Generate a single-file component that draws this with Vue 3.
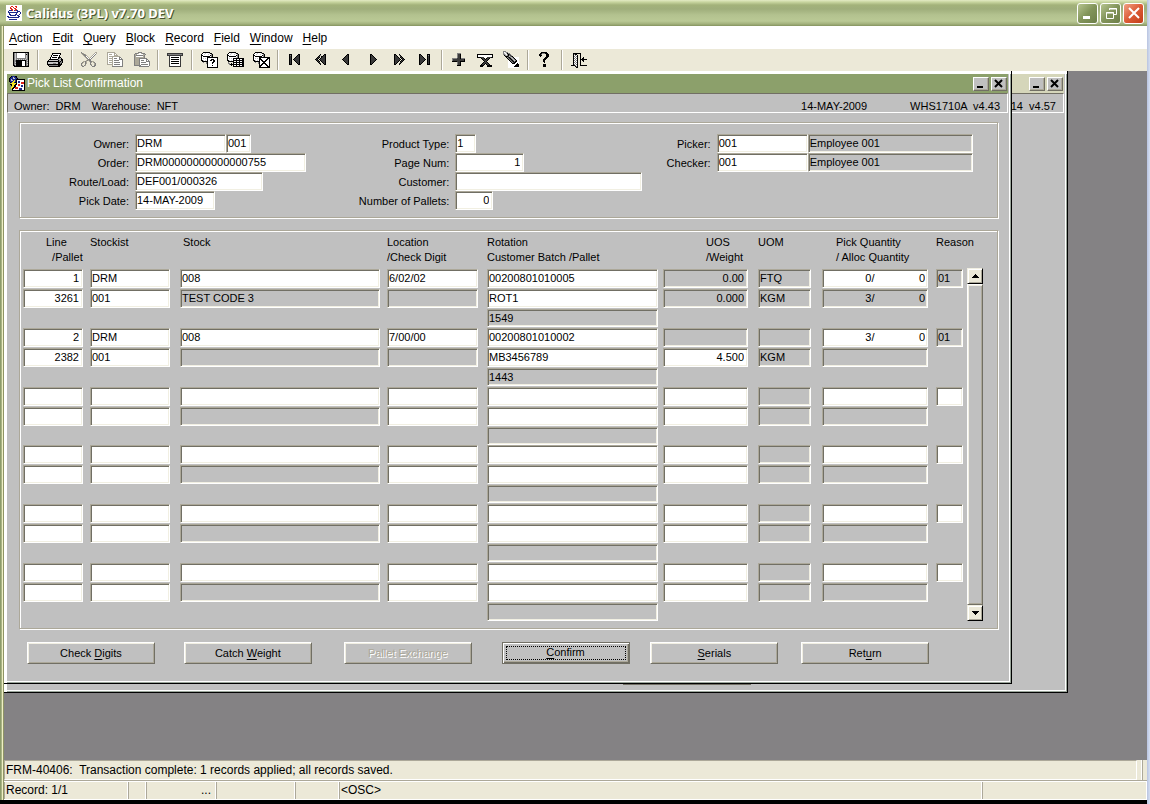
<script setup>
const menus = [
  ['', 'A', 'ction'], ['', 'E', 'dit'], ['', 'Q', 'uery'], ['', 'B', 'lock'],
  ['', 'R', 'ecord'], ['', 'F', 'ield'], ['', 'W', 'indow'], ['', 'H', 'elp'],
]

// Toolbar glyphs are small bitmaps: one character per pixel, looked up in the palette.
const palette = { k: '#000000', d: '#3a3a3a', g: '#808080', s: '#aca899', l: '#c6c6c6', w: '#ffffff' }

const glyphs = {
  save: [
    '', ' kkkkkkkkkkkkkkkk', ' kglgwwwwwwwwglgk', ' kglgwwwwwwwwgkgk', ' kglgwwwwwwwwglgk',
    ' kglgwwwwwwwwglgk', ' kglgwwwwwwwwglgk', ' kglgggggggggglgk', ' kglglglglglglggk',
    ' kggkkkkkkkkkkglk', ' kggkkkkkkwwwkggk', ' kglkkkkkkwwwkglk', ' kggkkkkkkwwwkggk',
    ' kglkkkkkkwwwkglk', ' kkgkkkkkkwwwkggk', '  kkkkkkkkkkkkkkk',
  ],
  print: [
    '', '', '      kkkkkkkkk', '      kwwwwwwwk', '     kwkkkkkwk', '     kwwwwwwwk', '    kwkkkkkwkkk',
    '    kwwwwwwwkglk', '   kkkkkkkkkglgkk', '  klllllllllkglkk', ' kkkkkkkkkkkkgkgk', ' kllllllllllkkggk',
    ' klllllgggllkkgk', ' kkkkkkkkkkkkkkk', '  kgggggggggkkk', '   kkkkkkkkkkk',
  ],
  cut: [
    '', ' g             ss', ' sgs          sws', '  sggs       swg', '   sggs     swg', '    sgws   swg', '     sgws swg',
    '      sgwswg', '       sggg', '      sgsgg', '   ssgs  sggss', '  gs gs   gs sg', ' gs  gs   g   sg',
    ' g   g    gs  sg', ' gs gs     g  gg', '  gg        ggg',
  ],
  copy: [
    '', ' ssssssss', ' swwwwwwss', ' swssswwsws', ' swwwwwwssss', ' swsssssssssss', ' swwwwswwwwwwgg',
    ' swsssswgggwwgwg', ' swwwwswwwwwwgggg', ' swsssswgggggwwwg', ' swwwwswwwwwwwwwg', ' swsssswggggggwwg',
    ' swwwwswwwwwwwwwg', ' sssssswggggggwwg', '      swwwwwwwwwg', '      ggggggggggg',
  ],
  paste: [
    '', '      gggg', '   gggswwsggg', '  gsswwwwwwssg', '  gsgggggggsg', '  gswwwwwwwsg', '  gsssssssssg',
    '  gssssgggggggg', '  gssssgwwwwwwgg', '  gssssgwgggwwgwg', '  gssssgwwwwwwgggg', '  gssssgwgggggwwwg',
    '  gssssgwwwwwwwwwg', '  gssssgwgggggggwg', '  gggggggwwwwwwwwg', '       gggggggggg',
  ],
  list: [
    '', '', ' dddddddddddddddd', ' dggggggggggggggd', ' dddddddddddddddd', '   dwwwwwwwwwwd', '   dwkkkkkkkkwd',
    '   dwwwwwwwwwwd', '   dwkkkkkkkkwd', '   dwwwwwwwwwwd', '   dwkkkkkkkkwd', '   dwwwwwwwwwwd',
    '   dwkkkkkkkkwd', '   dwwwwwwwwwwd', '   dwwwwwwwwwwd', '   dddddddddddd',
  ],
  enterQuery: [
    '', '   kkkkkkk', '  kwwlwwwlkk', ' kwwlwwwlwwgk', ' kkwwwwwwwkgk', ' kwkkkkkkkwgk', ' kwwwwwkkkkkkkkkkk', ' kwlwlwkwwwwwwwwwk',
    ' kwwwwwkwwwkkkwwwk', ' kklwlwkwwkkwkkwwk', '  kkkkkkwwwwwkkwwk', '   g  gkwwwwkkwwwk', '      gkwwwwkwwwwk',
    '       kwwwwwwwwwk', '       kwwwwkwwwwk', '       kwwwwwwwwwk', '       kkkkkkkkkkk',
  ],
  runQuery: [
    '', '   kkkkkkk', '  kwwlwwwlkk', ' kwwlwwwlwwgk', ' kkwwwwwwwkgk', ' kwkkkkkkkwgk', ' kwwwwwwwwlgk', ' kwlwlwkkkkkkkkkkk',
    ' kwwwwwkwwkwwkwwkk', ' kklwlwkkkkkkkkkkk', '  kkkkkkwwkwwkwwkk', '  g    kkkkkkkkkkk', '  gg k kwwkwwkwwkk', '   gkkkkkkkkkkkkkk',
    '     k kwwkwwkwwkk', '       kkkkkkkkkkk',
  ],
  cancelQuery: [
    '', '   kkkkkkk', '  kwwlwwwlkk', ' kwwlwwwlwwgk', ' kkwwwwwwwkgk', ' kwkkkkkkkwgk', ' kwwwwwkkkkkkkkkkk', ' kwlwlwkkwwwwwwkkk',
    ' kwwwwwkkkwwwwkkwk', ' kklwlwkwkkwwkkwwk', '  kkkkkkwwkkkkwwwk', '   g  gkwwwkkwwwwk', '      gkwwkkkkwwwk', '       kwkkwwkkwwk',
    '       kkkwwwwkkwk', '       kkwwwwwwkkk', '       kkkkkkkkkkk',
  ],
  first: [
    '', '', '', '   kkk      kk', '   kgk     kdk', '   kdk    kddk', '   kdk   kdddk', '   kdk  kddddk', '   kdk kdddddk',
    '   kdk  kddddk', '   kdk   kdddk', '   kdk    kddk', '   kdk     kdk', '   kkk      kk',
  ],
  pageUp: [
    '', '', '', '        k   kk', '       kg  kdk', '      kd kkddk', '     kdk kdddk', '    kdk kddddk', '   kdk kdddddk',
    '    kdk kddddk', '     kdk kdddk', '      kd  kddk', '       kd  kdk', '        k   kk',
  ],
  prev: [
    '', '', '', '         kk', '        kdk', '       kddk', '      kdddk', '     kddddk', '    kdddddk',
    '     kddddk', '      kdddk', '       kddk', '        kdk', '         kk',
  ],
  next: [
    '', '', '', '      kk', '      kdk', '      kddk', '      kdddk', '      kddddk', '      kdddddk',
    '      kddddk', '      kdddk', '      kddk', '      kdk', '      kk',
  ],
  pageDown: [
    '', '', '', '    kk   k', '    kdk  gk', '    kddk  dk', '    kdddk kdk', '    kddddk kdk', '    kdddddk kdk',
    '    kddddk kdk', '    kdddk kdk', '    kddk  dk', '    kdk  dk', '    kk   k',
  ],
  last: [
    '', '', '', '   kk      kkk', '   kdk     kgk', '   kddk    kdk', '   kdddk   kdk', '   kddddk  kdk', '   kdddddk kdk',
    '   kddddk  kdk', '   kdddk   kdk', '   kddk    kdk', '   kdk     kdk', '   kk      kkk',
  ],
  insert: [
    '', '', '       gggg', '       gddk', '       gddk', '       gddk', '       gddk', '  gggggdddkgggg', '  gdddddddddddk', '  gdddddddddddk',
    '  kkkkkdddkkkkk', '       gddk', '       gddk', '       gddk', '       kkkk',
  ],
  remove: [
    '', '', '', ' kkkkkkkkkkkkkkkk', ' kwwwwwwwwwwwwwwk', ' kwwwwwwwwwwwwwwk', ' kkkkdddwwwddddkk', '     kddk kddk', '      kddkddk',
    '       kdddk', '        kdk', '       kdddk', '      kddkddk', '     kddk kddk', '    kkkk   kkkkk', '    kkk    kkkkk',
  ],
  clear: [
    ' ggg', ' gwlgg', ' glwlkgg', ' gglwgkdg', '  kglgkgdg', '   kkkdlgdk', '    kgdkglgkwwwww', '     kgdkglgkwwww', '      kgdkglgkwww',
    '      wkgdkglgkww', '      wwkgdkgkkww', '      wwwkgdkkwww', '      wwwwkkkwwkw', '      wwwwwwwwkkk', '      wwwwwwwkkkk', '      wwwwwwkkkkk', '      wwwwwwwwwww',
  ],
  help: [
    '', '     kkkkkk', '    kkgggkkk', '   kkg    kkk', '   kkk    kkk', '    k     kkk', '         kkk', '        kkk', '       kkk',
    '       kk', '       kk', '        k', '', '       kkk', '       kkk', '       kkk',
  ],
  exit: [
    '', '', '   kkkkkkkk', '   kgkk   k', '   kwgwk  k', '   kgwgk  k', '   kwgwk  k  k', '   kgwgk  k kk', '   kwgwk  kkkkkkk',
    '   kgwgk  k kk', '   kwgwk  k  k', '   kgwgk  k', '   kwgwk  k', '   kgwgk  k', ' kkkkgwk  kkkkkkk', '     kgk', '      kk',
  ],
  java: [
    'wwwwwwwwwwwwwwww', 'wwwwwrrwwrrwwwww', 'wwwwrwwrwwrwwwww', 'wwwwrrwwrrwwwwww', 'wwwwwrrwwrrwwwww', 'wwwbbbrwbrbbwwww', 'wwbwwwwwwwwbbbww',
    'wwbbbbbbbbbbwwbw', 'wwwbwwwwwwbwwwbw', 'wwwbbwwwwbbwwbww', 'wwwwbbbbbbwbbwww', 'wbbwwwwwwwwwbbww', 'wwbbbbbbbbbbbwww', 'wwwwwwwwwwwwwwww', 'wwwbbbbbbbbwwwww', 'wwwwwwwwwwwwwwww',
  ],
  form: [
    '  kbbbkk', ' kbblbbkg', 'kbbbllbbkg', 'kblbbbbkkkkkkkkk', 'kbllbybkwwwwwwwk', 'kbbbyybkwbbwwwwk', ' kbyybkkwbbwrrrk', '  yyyyykwwwwrrrk',
    ' kkyyykkwrrwwwwk', '  kyykkwwrrwbbwk', '   yykkwwwwwbbwk', '  yykkrrrwwwwwwk', '  ykkwrrrwbbbwwk', '   kwwwwwwbbbwwk', '   kkkkkkkkkkkkk',
  ],
}
const extra = { r: '#e02418', b: '#1c2a8c', y: '#f8e820' }

function layers(name) {
  const out = {}
  glyphs[name].forEach((row, y) => {
    for (let x = 0; x < row.length;) {
      const c = row[x]
      let n = 1
      while (row[x + n] === c) n++
      if (c !== ' ') out[c] = (out[c] || '') + `M${x} ${y}h${n}v1h-${n}z`
      x += n
    }
  })
  return Object.entries(out).map(([c, d]) => ({ d, fill: palette[c] || extra[c] }))
}

const tool = (icon, label) => ({ icon, label, layers: layers(icon) })
const toolGroups = [
  [tool('save', 'Save')],
  [tool('print', 'Print')],
  [tool('cut', 'Cut'), tool('copy', 'Copy'), tool('paste', 'Paste')],
  [tool('list', 'List of values')],
  [tool('enterQuery', 'Enter query'), tool('runQuery', 'Execute query'), tool('cancelQuery', 'Cancel query')],
  [tool('first', 'First record'), tool('pageUp', 'Previous set'), tool('prev', 'Previous record'),
    tool('next', 'Next record'), tool('pageDown', 'Next set'), tool('last', 'Last record')],
  [tool('insert', 'Insert record'), tool('remove', 'Delete record'), tool('clear', 'Clear record')],
  [tool('help', 'Help')],
  [tool('exit', 'Exit')],
]
const javaIcon = layers('java')
const formIcon = layers('form')

const info = { owner: 'Owner:  DRM', warehouse: 'Warehouse:  NFT', date: '14-MAY-2009', version: 'WHS1710A  v4.43', backVersion: '14  v4.57' }
const statusMessage = 'FRM-40406:  Transaction complete: 1 records applied; all records saved.'

const headerColumns = [
  [
    { label: 'Owner:', fields: [{ v: 'DRM', w: 'w91' }, { v: '001', w: 'w25' }] },
    { label: 'Order:', fields: [{ v: 'DRM00000000000000755', w: 'w171' }] },
    { label: 'Route/Load:', fields: [{ v: 'DEF001/000326', w: 'w128' }] },
    { label: 'Pick Date:', fields: [{ v: '14-MAY-2009', w: 'w80' }] },
  ],
  [
    { label: 'Product Type:', fields: [{ v: '1', w: 'w21' }] },
    { label: 'Page Num:', fields: [{ v: '1', w: 'w69', num: true }] },
    { label: 'Customer:', fields: [{ v: '', w: 'w187' }] },
    { label: 'Number of Pallets:', fields: [{ v: '0', w: 'w38', num: true }] },
  ],
  [
    { label: 'Picker:', fields: [{ v: '001', w: 'w91' }, { v: 'Employee 001', w: 'w165', ro: true }] },
    { label: 'Checker:', fields: [{ v: '001', w: 'w91' }, { v: 'Employee 001', w: 'w165', ro: true }] },
  ],
]

const columns = [
  { key: 'line', head: 'Line\n  /Pallet' },
  { key: 'stockist', head: 'Stockist' },
  { key: 'stock', head: 'Stock' },
  { key: 'location', head: 'Location\n/Check Digit' },
  { key: 'rotation', head: 'Rotation\nCustomer Batch /Pallet' },
  { key: 'uos', head: 'UOS\n/Weight' },
  { key: 'uom', head: 'UOM' },
  { key: 'pick', head: 'Pick Quantity\n/ Alloc Quantity' },
  { key: 'reason', head: 'Reason' },
]

const e = (v = '') => ({ v })
const n = (v = '') => ({ v, num: true })
const ro = (v = '') => ({ v, ro: true })
const nro = (v = '') => ({ v, num: true, ro: true })
const pair = (a, b, r = false) => ({ pair: [a, b], ro: r })

const blank = () => [
  [n(), e(), e(), e(), e(), n(), ro(), pair('', ''), e()],
  [n(), e(), ro(), e(), e(), n(), ro(), pair('', '', true), null],
  [null, null, null, null, ro(), null, null, null, null],
]
const records = [
  [
    [n('1'), e('DRM'), e('008'), e('6/02/02'), e('00200801010005'), nro('0.00'), ro('FTQ'), pair('0/', '0'), ro('01')],
    [n('3261'), e('001'), ro('TEST CODE 3'), ro(), e('ROT1'), nro('0.000'), ro('KGM'), pair('3/', '0', true), null],
    [null, null, null, null, ro('1549'), null, null, null, null],
  ],
  [
    [n('2'), e('DRM'), e('008'), e('7/00/00'), e('00200801010002'), nro(), ro(), pair('3/', '0'), ro('01')],
    [n('2382'), e('001'), ro(), ro(), e('MB3456789'), n('4.500'), ro('KGM'), pair('', '', true), null],
    [null, null, null, null, ro('1443'), null, null, null, null],
  ],
  blank(), blank(), blank(), blank(),
]

const actions = [
  { text: ['Check ', 'D', 'igits'] },
  { text: ['Catch ', 'W', 'eight'] },
  { text: ['Pallet Exchange', '', ''], disabled: true },
  { text: ['', 'C', 'onfirm'], primary: true },
  { text: ['', 'S', 'erials'] },
  { text: ['Ret', 'u', 'rn'] },
]
</script>

<template>
  <div class="screen">
    <div class="app">
      <header class="titlebar">
        <svg class="px" width="16" height="16" viewBox="0 0 16 16" aria-hidden="true">
          <path v-for="l in javaIcon" :key="l.fill" :d="l.d" :fill="l.fill" />
        </svg>
        <h1>Calidus (3PL) v7.70 DEV</h1>
        <div class="winbtns">
          <button type="button" aria-label="Minimize">
            <svg width="18" height="18" viewBox="0 0 18 18"><path d="M4 12h7v3H4z" fill="#fff" /></svg>
          </button>
          <button type="button" aria-label="Restore">
            <svg width="18" height="18" viewBox="0 0 18 18" fill="none" stroke="#fff"><path d="M7.500 6V4.500h7v6H12M7 5h8M4.500 8.500h7v6h-7zM4 9h8" /></svg>
          </button>
          <button type="button" aria-label="Close" class="close">
            <svg width="18" height="18" viewBox="0 0 18 18" fill="none" stroke="#fff" stroke-width="2"><path d="M4 4l10 10M14 4L4 14" /></svg>
          </button>
        </div>
      </header>

      <nav class="menubar" aria-label="Main menu">
        <button v-for="m in menus" :key="m[1]" type="button">{{ m[0] }}<u>{{ m[1] }}</u>{{ m[2] }}</button>
      </nav>

      <div class="toolbar" role="toolbar" aria-label="Tools">
        <div v-for="(g, gi) in toolGroups" :key="gi" class="group">
          <button v-for="t in g" :key="t.icon" type="button" :aria-label="t.label">
            <svg class="px" width="18" height="18" viewBox="0 0 18 18" aria-hidden="true">
              <path v-for="l in t.layers" :key="l.fill" :d="l.d" :fill="l.fill" />
            </svg>
          </button>
        </div>
      </div>

      <main class="desktop">
        <section class="mdi back" aria-label="Background form">
          <div class="mdi-title">
            <div class="mdi-btns">
              <button type="button" aria-label="Minimize form"><svg class="px" width="12" height="12" viewBox="0 0 12 12"><path d="M2 8h6v2H2z" /></svg></button>
              <button type="button" aria-label="Close form"><svg width="12" height="12" viewBox="0 0 12 12" fill="none" stroke="#000" stroke-width="2"><path d="M2 2l7 7M9 2L2 9" /></svg></button>
            </div>
          </div>
          <div class="infobar"><span class="version">{{ info.backVersion }}</span></div>
          <div class="peek"></div>
        </section>

        <section class="mdi front">
          <div class="mdi-title active">
            <svg class="px" width="16" height="16" viewBox="0 0 16 16" aria-hidden="true">
              <path v-for="l in formIcon" :key="l.fill" :d="l.d" :fill="l.fill" />
            </svg>
            <h2>Pick List Confirmation</h2>
            <div class="mdi-btns">
              <button type="button" aria-label="Minimize window"><svg class="px" width="12" height="12" viewBox="0 0 12 12"><path d="M2 8h6v2H2z" /></svg></button>
              <button type="button" aria-label="Close window"><svg width="12" height="12" viewBox="0 0 12 12" fill="none" stroke="#000" stroke-width="2"><path d="M2 2l7 7M9 2L2 9" /></svg></button>
            </div>
          </div>
          <div class="infobar">
            <span>{{ info.owner }}</span><span>{{ info.warehouse }}</span>
            <span class="date">{{ info.date }}</span><span>{{ info.version }}</span>
          </div>

          <form class="body" @submit.prevent>
            <div class="frame head">
              <div v-for="(col, ci) in headerColumns" :key="ci" class="hcol">
                <div v-for="(r, ri) in col" :key="r.label" class="hrow">
                  <label :for="`h${ci}-${ri}`">{{ r.label }}</label>
                  <input v-for="(f, fi) in r.fields" :id="fi ? null : `h${ci}-${ri}`" :key="fi" type="text" class="box"
                    :class="[f.w, { ro: f.ro, num: f.num }]" :value="f.v" :readonly="f.ro"
                    :aria-label="fi ? r.label + ' detail' : null">
                </div>
              </div>
            </div>

            <div class="frame lines">
              <div class="grid">
                <table>
                  <colgroup><col v-for="c in columns" :key="c.key" :class="'c-' + c.key"></colgroup>
                  <thead>
                    <tr><th v-for="c in columns" :key="c.key" scope="col" :class="'h-' + c.key">{{ c.head }}</th></tr>
                  </thead>
                  <tbody v-for="(rec, i) in records" :key="i">
                    <tr v-for="(row, j) in rec" :key="j">
                      <td v-for="(cell, k) in row" :key="k" :class="'p-' + columns[k].key">
                        <div v-if="cell && cell.pair" class="box pair" :class="{ ro: cell.ro }">
                          <input type="text" :value="cell.pair[0]" :readonly="cell.ro" :aria-label="`Quantity, record ${i + 1} row ${j + 1}`">
                          <input type="text" :value="cell.pair[1]" :readonly="cell.ro" :aria-label="`Remainder, record ${i + 1} row ${j + 1}`">
                        </div>
                        <input v-else-if="cell" type="text" class="box" :class="{ ro: cell.ro, num: cell.num }"
                          :value="cell.v" :readonly="cell.ro" :aria-label="`${columns[k].key}, record ${i + 1} row ${j + 1}`">
                      </td>
                    </tr>
                  </tbody>
                </table>
              </div>
              <div class="scroll">
                <button type="button" aria-label="Scroll up"><svg class="px" width="7" height="4" viewBox="0 0 7 4"><path d="M3 0h1v1h1v1h1v1h1v1H0V3h1V2h1V1h1z" /></svg></button>
                <div class="track"></div>
                <button type="button" aria-label="Scroll down"><svg class="px" width="7" height="4" viewBox="0 0 7 4"><path d="M0 0h7v1H6v1H5v1H4v1H3V3H2V2H1V1H0z" /></svg></button>
              </div>
            </div>

            <div class="actions">
              <button v-for="a in actions" :key="a.text.join('')" type="button" :disabled="a.disabled" :class="{ primary: a.primary }">
                <span>{{ a.text[0] }}<u>{{ a.text[1] }}</u>{{ a.text[2] }}</span>
              </button>
            </div>
          </form>
        </section>
      </main>

      <footer class="status">
        <div class="message"><p>{{ statusMessage }}</p><i></i></div>
        <div class="cells">
          <span>Record: 1/1</span><span></span><span class="dots">...</span><span></span><span></span><span>&lt;OSC&gt;</span><span></span>
        </div>
      </footer>
    </div>
  </div>
</template>

<style>
html, body { margin: 0; background: #000; }
</style>

<style scoped>
* { box-sizing: border-box; }
.screen {
  min-height: 100vh;
  display: flex;
  padding-right: 3px;
  background: linear-gradient(to right, #b9c4e0, #d5dff2) right / 3px 100% no-repeat;
  font-family: "Liberation Sans", Arial, sans-serif;
  font-size: 11px;
  color: #000;
}
.app {
  flex: 1;
  min-width: 0;
  display: flex;
  flex-direction: column;
  padding-left: 4px;
  padding-bottom: 4px;
  background: linear-gradient(#000, #000) bottom / 100% 4px no-repeat,
    linear-gradient(to right, #8d9b6b 0 1px, #a9b485 1px 2px, #efefc4 2px 3px, #8e9465 3px 4px, #000 4px);
}
button { font: inherit; color: inherit; margin: 0; padding: 0; border: 0; background: none; }
u { text-decoration: underline; text-underline-offset: 2px; }
.px { shape-rendering: crispEdges; }

.titlebar {
  height: 26px;
  margin-left: -4px;
  padding: 0 3px 0 6px;
  display: flex;
  align-items: center;
  background: linear-gradient(#e3ebc4 0, #c9d6a0 2px, #a3b27a 5px, #9fae7b 9px, #b3c28f 15px, #bac995 21px, #a2b17c 24px, #85935f 26px);
}
.titlebar h1 {
  flex: 1;
  margin: 0 0 0 4px;
  font: bold 13px/24px "Noto Sans", "Open Sans", sans-serif;
  color: #fff;
  text-shadow: 1px 1px 0 #49542f;
}
.winbtns { display: flex; gap: 2px; }
.winbtns button {
  width: 21px;
  height: 21px;
  border: 1px solid #fff;
  border-radius: 3px;
  display: grid;
  place-items: center;
  background: linear-gradient(135deg, #b6c48f, #82945a 50%, #6d7f48);
}
.winbtns .close { background: linear-gradient(135deg, #f0a184, #dc5b36 50%, #c23e18); }

.menubar { height: 23px; padding-left: 5px; display: flex; gap: 10px; background: #fff; font-size: 12px; line-height: 24px; }

.toolbar { height: 22px; padding-left: 4px; display: flex; background: #ece9d8; }
.group { display: flex; }
.group + .group::before { content: ""; width: 2px; height: 20px; margin: 1px 3px; background: linear-gradient(to right, #aca899 50%, #fff 50%); }
.group button { width: 26px; height: 22px; display: grid; place-items: center; }

.desktop { position: relative; flex: 1; padding: 0 135px 76px 0; background: #848284; }
.mdi {
  padding: 3px 3px 3px 3px;
  background: #c0c0c0;
  border-right: 1px solid #000;
  border-bottom: 1px solid #000;
  box-shadow: inset 3px 3px 0 #fff, inset -1px -1px 0 #9aa59a, inset -2px -2px 0 #fff;
}
.front { position: relative; }
.back { position: absolute; top: 0; left: 0; right: 79px; bottom: 67px; }
.peek { position: absolute; left: 619px; bottom: 7px; width: 128px; height: 1px; background: #716f64; }
.mdi-title { height: 19px; display: flex; align-items: center; background: #d5d6ba; padding: 0 1px 0 2px; }
.mdi-title.active { background: #8ca06b; color: #fff; }
.mdi-title h2 { margin: 0 0 0 2px; font-size: 12px; line-height: 17px; font-weight: normal; }
.mdi-btns { margin-left: auto; display: flex; gap: 2px; }
.mdi-btns button {
  width: 16px;
  height: 14px;
  display: grid;
  place-items: center;
  background: #c0c0c0;
  border: 1px solid;
  border-color: #fff #716f64 #716f64 #fff;
  box-shadow: inset -1px -1px 0 #aca899;
}
.infobar {
  height: 20px;
  padding: 3px 7px 0 6px;
  display: flex;
  gap: 11px;
  white-space: pre;
  line-height: 18px;
  border: 1px solid;
  border-color: #716f64 #fff #fff #716f64;
}
.infobar .date, .infobar .version { margin-left: auto; }
.infobar .date { margin-right: 32px; }

.body { padding: 9px 10px 16px 12px; }
.frame { border: 1px solid #aca899; box-shadow: inset 1px 1px 0 #fff, 1px 1px 0 #fff; }
.head { display: grid; grid-template-columns: 320fr 314fr 342fr; height: 96px; padding: 11px 0 0; }
.hcol { display: flex; flex-direction: column; }
.hrow { display: flex; height: 19px; }
.hrow label { width: 109px; margin-right: 6px; text-align: right; line-height: 20px; white-space: nowrap; }
.hcol:last-child label { width: 56px; }
.box {
  display: block;
  height: 19px;
  margin: 0;
  padding: 0 1px 1px 1px;
  font: inherit;
  color: #000;
  background: #fff;
  border: 1px solid;
  border-color: #aca899 #fff #fff #aca899;
  border-radius: 0;
  outline: 0;
  box-shadow: inset 1px 1px 0 #716f64, inset -1px -1px 0 #f1efe2;
}
.ro { background: #c0c0c0; }
.num { text-align: right; padding-right: 3px; }
.w21 { width: 21px; }
.w25 { width: 25px; }
.w38 { width: 38px; }
.w69 { width: 69px; }
.w80 { width: 80px; }
.w91 { width: 91px; }
.w128 { width: 128px; }
.w165 { width: 165px; }
.w171 { width: 171px; }
.w187 { width: 187px; }

.lines { display: flex; margin-top: 12px; padding: 1px 14px 7px 3px; }
.grid { flex: 1; min-width: 0; }
table { width: 100%; table-layout: fixed; border-collapse: collapse; }
.c-line { width: 67px; }
.c-stockist { width: 90px; }
.c-location { width: 100px; }
.c-rotation { width: 176px; }
.c-uos { width: 95px; }
.c-uom { width: 64px; }
.c-pick { width: 114px; }
.c-reason { width: 27px; }
th { height: 37px; padding: 3px 0 0; font-weight: normal; text-align: left; vertical-align: top; line-height: 15px; white-space: pre; }
.h-line { padding-left: 23px; }
.h-stock { padding-left: 3px; }
.h-uos { padding-left: 43px; }
.h-pick { padding-left: 14px; }
td { height: 20px; padding: 0; vertical-align: top; }
tr:last-child td { height: 19px; }
tbody:nth-of-type(3n) tr:last-child td { height: 18px; }
td .box { width: 100%; }
tr:last-child td .box { height: 18px; }
.p-line { padding-right: 7px; }
.p-stockist { padding-right: 10px; }
.p-stock { padding-right: 7px; }
.p-location { padding-right: 9px; }
.p-rotation { padding-right: 5px; }
.p-uos { padding-right: 10px; }
.p-uom { padding-right: 11px; }
.p-pick { padding-right: 8px; }
.pair { display: flex; padding: 1px 2px 1px 1px; }
.pair input { flex: 1; min-width: 0; height: 14px; margin: 0; padding: 0; border: 0; outline: 0; background: none; font: inherit; text-align: right; }

.scroll { width: 16px; margin: 36px 0 0 4px; display: flex; flex-direction: column; }
.scroll button {
  height: 16px;
  display: grid;
  place-items: center;
  background: #ece9d8;
  border: 1px solid;
  border-color: #f1efe2 #000 #000 #f1efe2;
  box-shadow: inset 1px 1px 0 #fff, inset -1px -1px 0 #aca899;
}
.track { flex: 1; border: 1px solid; border-color: #fff #716f64 #716f64 #fff; box-shadow: inset 1px 1px 0 #f1efe2, inset -1px -1px 0 #aca899; }

.actions { margin: 13px 0 0 8px; display: grid; grid-template-columns: 157fr 160fr 158fr 149fr 151fr 197fr; }
.actions button {
  width: 128px;
  height: 22px;
  padding-bottom: 1px;
  border: 1px solid;
  border-color: #fff #716f64 #716f64 #fff;
  box-shadow: inset 1px 1px 0 #f1efe2, inset -1px -1px 0 #aca899;
}
.actions button:disabled { color: #aca899; text-shadow: 1px 1px 0 #fff; }
.actions .primary { padding: 2px 3px 3px; border-color: #716f64; box-shadow: inset 1px 1px 0 #fff, inset -1px -1px 0 #716f64, inset -2px -2px 0 #aca899; }
.primary span { display: block; height: 14px; line-height: 13px; outline: 1px dotted #000; outline-offset: -1px; }

.status { background: #ece9d8; font-size: 12px; white-space: pre; }
.message { height: 21px; display: flex; border-bottom: 1px solid #aca899; }
.message p { flex: 1; margin: 0; padding-left: 1px; line-height: 19px; border: 1px solid; border-color: #aca899 #fff #fff #aca899; }
.message i { width: 6px; border-right: 1px solid #aca899; box-shadow: inset -1px 0 0 #fff; margin-right: 4px; }
.cells { height: 19px; display: grid; grid-template-columns: 124px 18px 70px 79px 44px 1fr 165px; border-top: 1px solid #fff; border-bottom: 1px solid #fff; }
.cells span { padding-left: 1px; line-height: 17px; border: solid; border-width: 0 1px; border-color: #fff #fff #fff #aca899; }
.cells .dots { text-align: right; padding-right: 4px; }
</style>
